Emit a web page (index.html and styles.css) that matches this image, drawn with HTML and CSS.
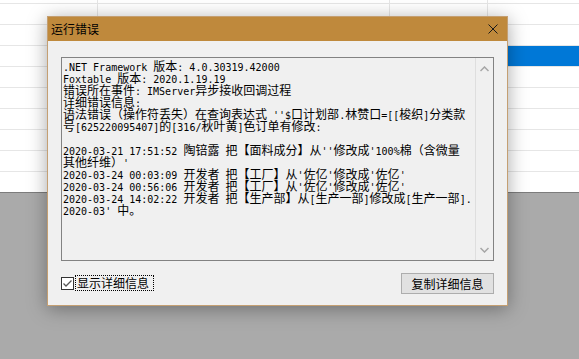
FILE: index.html
```html
<!DOCTYPE html>
<html lang="zh-CN">
  <head>
    <meta charset="UTF-8" />
    <meta name="viewport" content="width=device-width, initial-scale=1.0" />
    <title>运行错误</title>
    <link rel="stylesheet" href="styles.css">
  </head>
  <body>
    <!-- 背景表格 -->
    <div class="sheet">
      <div class="row first"><div class="cell c1"></div><div class="cell c2"></div><div class="cell c3"></div><div class="cell c4"></div></div>
      <div class="row"><div class="cell c1"></div><div class="cell c2"></div><div class="cell c3"></div><div class="cell c4"></div></div>
      <div class="row"><div class="cell c1"></div><div class="cell c2"></div><div class="cell c3"></div><div class="cell c4"></div></div>
      <div class="row selected"><div class="cell c1"></div><div class="cell c2"></div><div class="cell c3"></div><div class="cell c4"></div></div>
      <div class="row"><div class="cell c1"></div><div class="cell c2"></div><div class="cell c3"></div><div class="cell c4"></div></div>
      <div class="row"><div class="cell c1"></div><div class="cell c2"></div><div class="cell c3"></div><div class="cell c4"></div></div>
      <div class="row"><div class="cell c1"></div><div class="cell c2"></div><div class="cell c3"></div><div class="cell c4"></div></div>
      <div class="row"><div class="cell c1"></div><div class="cell c2"></div><div class="cell c3"></div><div class="cell c4"></div></div>
      <div class="row"><div class="cell c1"></div><div class="cell c2"></div><div class="cell c3"></div><div class="cell c4"></div></div>
      <div class="row last"><div class="cell c1"></div><div class="cell c2"></div><div class="cell c3"></div><div class="cell c4"></div></div>
      <div class="empty"></div>
    </div>

    <!-- 错误对话框 -->
    <div class="dialog">
      <div class="titlebar">
        <span class="title">运行错误</span>
        <svg class="close" width="10" height="10" viewBox="0 0 10 10">
          <path d="M0.5 0.5 L9.5 9.5 M9.5 0.5 L0.5 9.5" stroke="#1a1a1a" stroke-width="1" fill="none" />
        </svg>
      </div>
      <div class="body">
        <div class="textbox">
          <div class="log">
            <div class="line"><span class="m">.NET Framework </span>版本<span class="m">: 4.0.30319.42000</span></div>
            <div class="line"><span class="m">Foxtable </span>版本<span class="m">: 2020.1.19.19</span></div>
            <div class="line">错误所在事件<span class="m">: IMServer</span>异步接收回调过程</div>
            <div class="line">详细错误信息<span class="m">:</span></div>
            <div class="line">语法错误（操作符丢失）在查询表达式<span class="m"> ''$</span>口计划部<span class="m">.</span>林赞口<span class="m">=[[</span>梭织<span class="m">]</span>分类款</div>
            <div class="line">号<span class="m">[625220095407]</span>的<span class="m">[316/</span>秋叶黄<span class="m">]</span>色订单有修改<span class="m">:</span></div>
            <div class="line"></div>
            <div class="line"><span class="m">2020-03-21 17:51:52 </span>陶锫露<span class="m"> </span>把【面料成分】从<span class="m">''</span>修改成<span class="m">'100%</span>棉（含微量</div>
            <div class="line">其他纤维）<span class="m">'</span></div>
            <div class="line"><span class="m">2020-03-24 00:03:09 </span>开发者<span class="m"> </span>把【工厂】从<span class="m">'</span>佐亿<span class="m">'</span>修改成<span class="m">'</span>佐亿<span class="m">'</span></div>
            <div class="line"><span class="m">2020-03-24 00:56:06 </span>开发者<span class="m"> </span>把【工厂】从<span class="m">'</span>佐亿<span class="m">'</span>修改成<span class="m">'</span>佐亿<span class="m">'</span></div>
            <div class="line"><span class="m">2020-03-24 14:02:22 </span>开发者<span class="m"> </span>把【生产部】从<span class="m">[</span>生产一部<span class="m">]</span>修改成<span class="m">[</span>生产一部<span class="m">].</span></div>
            <div class="line"><span class="m">2020-03' </span>中。</div>
          </div>
          <div class="scrollbar">
            <svg width="9" height="6" viewBox="0 0 9 6">
              <path d="M0.5 5 L4.5 1 L8.5 5" stroke="#a6a6a6" stroke-width="1.5" fill="none" />
            </svg>
            <svg width="9" height="6" viewBox="0 0 9 6">
              <path d="M0.5 1 L4.5 5 L8.5 1" stroke="#a6a6a6" stroke-width="1.5" fill="none" />
            </svg>
          </div>
        </div>
        <div class="footer">
          <label class="check">
            <svg width="13" height="13" viewBox="0 0 13 13">
              <rect x="0.5" y="0.5" width="12" height="12" fill="#ffffff" stroke="#333333" />
              <path d="M2.5 6.5 L5 9 L10.5 3.5" stroke="#555555" stroke-width="1.3" fill="none" />
            </svg>
            <span class="focus">显示详细信息</span>
          </label>
          <button class="copy">复制详细信息</button>
        </div>
      </div>
    </div>
  </body>
</html>
```

FILE: styles.css
```css
body {
  margin: 0;
  width: 579px;
  height: 359px;
  overflow: hidden;
  position: relative;
  font-family: "Noto Sans CJK SC", sans-serif;
  font-size: 12px;
  color: #000;
  background-color: #aaaaaa;
}

/* background spreadsheet */
.sheet {
  background-color: #fff;
}

.row {
  display: flex;
  height: 21px;
  box-sizing: border-box;
  border-bottom: 1px solid #e6e6e6;
}

.row.first {
  height: 4px;
}

.row.last {
  border-bottom: 1px solid #7c7c7c;
}

.cell {
  box-sizing: border-box;
  border-right: 1px solid #e6e6e6;
}

.c1 { width: 98px; }
.c2 { width: 292px; }
.c3 { width: 98px; }
.c4 { flex: 1; border-right: none; }

.row.selected .c3,
.row.selected .c4 {
  background-color: #0078d7;
}

/* dialog */
.dialog {
  position: absolute;
  top: 16px;
  left: 47px;
  width: 461px;
  height: 290px;
  box-sizing: border-box;
  border: 1px solid #c49f72;
  background-color: #f0f0f0;
  box-shadow: 0 3px 18px rgba(0, 0, 0, 0.35);
  display: flex;
  flex-direction: column;
}

.titlebar {
  height: 24px;
  background-color: #bf893c;
  display: flex;
  align-items: center;
  justify-content: space-between;
  padding: 0 9px 0 3px;
}

.title {
  font-size: 12px;
  line-height: 14px;
}

.body {
  flex: 1;
  padding: 16px 13px 0 13px;
  display: flex;
  flex-direction: column;
}

.textbox {
  height: 204px;
  box-sizing: border-box;
  border: 1px solid #828282;
  display: flex;
}

.log {
  flex: 1;
  padding: 2px 0 0 1px;
  overflow: hidden;
}

.line {
  height: 12px;
  line-height: 12px;
  white-space: pre;
}

.m {
  font-family: "DejaVu Sans Mono", monospace;
  font-size: 10px;
}

.scrollbar {
  width: 17px;
  border-left: 1px solid #dedede;
  display: flex;
  flex-direction: column;
  justify-content: space-between;
  align-items: center;
  padding: 8px 0 7px 0;
}

.footer {
  margin-top: 11px;
  height: 22px;
  display: flex;
  align-items: center;
  justify-content: space-between;
}

.check {
  display: flex;
  align-items: center;
}

.focus {
  margin-left: 2px;
  padding: 0 4px 0 1px;
  line-height: 14px;
  outline: 1px dotted #000;
}

.copy {
  width: 93px;
  height: 21px;
  padding: 0;
  margin: 0;
  font-family: "Noto Sans CJK SC", sans-serif;
  font-size: 12px;
  color: #000;
  background-color: #e1e1e1;
  border: 1px solid #adadad;
}
```
